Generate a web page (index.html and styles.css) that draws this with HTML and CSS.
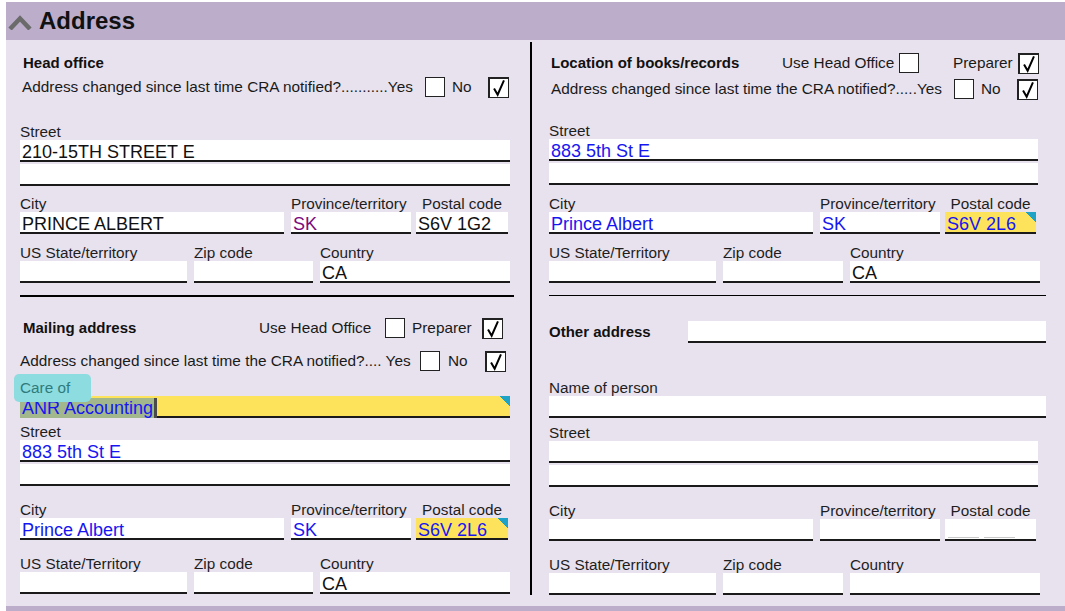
FILE: index.html
```html
<!DOCTYPE html>
<html lang="en">
<head>
    <meta charset="UTF-8">
    <title>Address</title>
    <link rel="stylesheet" href="styles.css">
</head>
<body>
<div class="page">
    <section class="section">
        <div class="section-head">
            <svg class="caret" width="24" height="16" viewBox="0 0 24 16"><polyline points="2,15 12,4.5 22,15" fill="none" stroke="#6b6b6b" stroke-width="4.5"/></svg>
            <h2>Address</h2>
        </div>

        <div class="columns">
            <!-- Head office / mailing -->
            <div class="col col-left">
                <div class="heading mt12">Head office</div>
                <div class="check-row mt4">
                    <span class="q q-wide">Address changed since last time CRA notified?...........Yes</span>
                    <span class="cb"></span>
                    <span class="no">No</span>
                    <span class="cb checked"><svg viewBox="0 0 20 20"><path d="M4.5 10.5 L8.5 17.5 L15.5 1.5"/></svg></span>
                </div>

                <div class="field mt25 w-street">
                    <label>Street</label>
                    <div class="box">210-15TH STREET E</div>
                    <div class="box mt2"></div>
                </div>
                <div class="field-row mt9">
                    <div class="field w-city"><label>City</label><div class="box">PRINCE ALBERT</div></div>
                    <div class="field w-prov"><label>Province/territory</label><div class="box purple">SK</div></div>
                    <div class="field w-postal postal"><label>Postal code</label><div class="box">S6V 1G2</div></div>
                </div>
                <div class="field-row wide-gap mt10">
                    <div class="field w-state"><label>US State/territory</label><div class="box"></div></div>
                    <div class="field w-zip"><label>Zip code</label><div class="box"></div></div>
                    <div class="field w-country"><label>Country</label><div class="box">CA</div></div>
                </div>

                <div class="rule thick mt12"></div>

                <div class="check-row mt20">
                    <span class="heading h-mailing">Mailing address</span>
                    <span class="opt opt-use">Use Head Office</span>
                    <span class="cb"></span>
                    <span class="opt opt-prep">Preparer</span>
                    <span class="cb checked"><svg viewBox="0 0 20 20"><path d="M4.5 10.5 L8.5 17.5 L15.5 1.5"/></svg></span>
                </div>
                <div class="check-row flush mt11">
                    <span class="q q-mail">Address changed since last time the CRA notified?.... Yes</span>
                    <span class="cb"></span>
                    <span class="no no-mail">No</span>
                    <span class="cb checked"><svg viewBox="0 0 20 20"><path d="M4.5 10.5 L8.5 17.5 L15.5 1.5"/></svg></span>
                </div>

                <div class="field care mt7 w-street">
                    <label class="care-label">Care of</label>
                    <div class="box yellow blue flagged"><span class="sel">ANR Accounting</span></div>
                    <div class="focus-ring"></div>
                </div>
                <div class="field mt5 w-street">
                    <label>Street</label>
                    <div class="box blue">883 5th St E</div>
                    <div class="box mt2"></div>
                </div>
                <div class="field-row mt15">
                    <div class="field w-city"><label>City</label><div class="box blue">Prince Albert</div></div>
                    <div class="field w-prov"><label>Province/territory</label><div class="box blue">SK</div></div>
                    <div class="field w-postal postal"><label>Postal code</label><div class="box yellow blue flagged">S6V 2L6</div></div>
                </div>
                <div class="field-row wide-gap mt15">
                    <div class="field w-state"><label>US State/Territory</label><div class="box"></div></div>
                    <div class="field w-zip"><label>Zip code</label><div class="box"></div></div>
                    <div class="field w-country"><label>Country</label><div class="box">CA</div></div>
                </div>
            </div>

            <!-- Books and records / other -->
            <div class="col col-right">
                <div class="check-row mt10">
                    <span class="heading h-books">Location of books/records</span>
                    <span class="opt opt-use-r">Use Head Office</span>
                    <span class="cb"></span>
                    <span class="opt opt-prep-r">Preparer</span>
                    <span class="cb checked"><svg viewBox="0 0 20 20"><path d="M4.5 10.5 L8.5 17.5 L15.5 1.5"/></svg></span>
                </div>
                <div class="check-row mt4">
                    <span class="q q-wide">Address changed since last time the CRA notified?.....Yes</span>
                    <span class="cb"></span>
                    <span class="no">No</span>
                    <span class="cb checked"><svg viewBox="0 0 20 20"><path d="M4.5 10.5 L8.5 17.5 L15.5 1.5"/></svg></span>
                </div>

                <div class="field mt22 w-street-r">
                    <label>Street</label>
                    <div class="box blue">883 5th St E</div>
                    <div class="box mt2"></div>
                </div>
                <div class="field-row mt10">
                    <div class="field w-city"><label>City</label><div class="box blue">Prince Albert</div></div>
                    <div class="field w-prov"><label>Province/territory</label><div class="box blue">SK</div></div>
                    <div class="field w-postal-r postal"><label>Postal code</label><div class="box yellow blue flagged">S6V 2L6</div></div>
                </div>
                <div class="field-row wide-gap mt10">
                    <div class="field w-state"><label>US State/Territory</label><div class="box"></div></div>
                    <div class="field w-zip-r"><label>Zip code</label><div class="box"></div></div>
                    <div class="field w-country"><label>Country</label><div class="box">CA</div></div>
                </div>

                <div class="rule thin mt12"></div>

                <div class="other-row mt25">
                    <span class="heading h-other">Other address</span>
                    <div class="box w-other"></div>
                </div>

                <div class="field mt36 w-full-r">
                    <label>Name of person</label>
                    <div class="box"></div>
                </div>
                <div class="field mt6 w-street-r">
                    <label>Street</label>
                    <div class="box"></div>
                    <div class="box mt2"></div>
                </div>
                <div class="field-row mt15">
                    <div class="field w-city"><label>City</label><div class="box"></div></div>
                    <div class="field w-prov"><label>Province/territory</label><div class="box"></div></div>
                    <div class="field w-postal-r postal"><label>Postal code</label><div class="box dashes"><span></span><span></span></div></div>
                </div>
                <div class="field-row wide-gap mt15">
                    <div class="field w-state"><label>US State/Territory</label><div class="box"></div></div>
                    <div class="field w-zip-r"><label>Zip code</label><div class="box"></div></div>
                    <div class="field w-country"><label>Country</label><div class="box"></div></div>
                </div>
            </div>
        </div>
        <div class="section-foot"></div>
    </section>
</div>
</body>
</html>
```

FILE: styles.css
```css
body {
    margin: 0;
    font-family: "Liberation Sans", Arial, sans-serif;
    color: #1a1a1a;
    background: #fff;
}
.page {
    padding: 2px 0 0 6px;
}
.section {
    background: #e8e2ee;
}
.section-head {
    height: 38px;
    background: #bcaecb;
    display: flex;
    align-items: center;
    padding-left: 2px;
}
.caret {
    margin-top: 1px;
}
.section-head h2 {
    margin: 0 0 0 7px;
    font-size: 24px;
    font-weight: bold;
    color: #111;
}
.section-foot {
    height: 8px;
    background: #bcaecb;
}
.columns {
    display: flex;
    padding: 2px 0 11px;
}
.col-left {
    width: 510px;
    padding-left: 14px;
    border-right: 2px solid #000;
}
.col-right {
    flex: 1;
    padding-left: 17px;
}

/* spacing */
.mt2 { margin-top: 2px; }
.mt4 { margin-top: 4px; }
.mt5 { margin-top: 5px; }
.mt6 { margin-top: 6px; }
.mt7 { margin-top: 7px; }
.mt9 { margin-top: 9px; }
.mt10 { margin-top: 10px; }
.mt11 { margin-top: 11px; }
.mt12 { margin-top: 12px; }
.mt15 { margin-top: 15px; }
.mt20 { margin-top: 20px; }
.mt22 { margin-top: 22px; }
.mt25 { margin-top: 25px; }
.mt36 { margin-top: 36px; }

.heading {
    font-size: 15px;
    font-weight: bold;
    line-height: 18px;
    padding-left: 3px;
    color: #111;
}

/* checkbox rows */
.check-row {
    display: flex;
    align-items: center;
    height: 22px;
    font-size: 15.35px;
    padding-left: 2px;
}
.check-row.flush {
    padding-left: 0;
}
.q { white-space: nowrap; }
.q-wide { width: 403px; }
.q-mail { width: 400px; }
.no { margin-left: 7px; width: 36px; }
.no-mail { margin-left: 8px; width: 37px; }
.h-mailing { width: 236px; padding-left: 1px; }
.opt-use { width: 126px; }
.opt-prep { margin-left: 7px; width: 70px; }
.h-books { width: 231px; padding-left: 0; }
.opt-use-r { width: 117px; }
.opt-prep-r { margin-left: 34px; width: 65px; }
.cb {
    width: 18px;
    height: 18px;
    background: #fff;
    border: 1px solid #222;
    display: block;
}
.cb.checked {
    border-left-width: 2px;
    border-top-width: 2px;
}
.cb svg {
    display: block;
    width: 18px;
    height: 18px;
}
.cb path {
    fill: none;
    stroke: #000;
    stroke-width: 2.2;
}

/* fields */
.field {
    position: relative;
}
.field label {
    display: block;
    font-size: 15.3px;
    line-height: 17px;
    height: 17px;
    color: #1e1e1e;
    white-space: nowrap;
}
.field .care-label {
    position: relative;
    z-index: 2;
    color: #2f7b7c;
}
.postal label {
    text-align: center;
}
.box {
    position: relative;
    height: 20px;
    background: #fff;
    border-bottom: 2px solid #1a1a1a;
    font-size: 18px;
    line-height: 24px;
    padding-left: 2px;
    color: #111;
    white-space: nowrap;
}
.box.blue { color: #1616f2; }
.box.purple { color: #7d0a7d; }
.box.yellow { background: #fde35b; }
.box.flagged::after {
    content: "";
    position: absolute;
    top: 0;
    right: 0;
    width: 10px;
    height: 10px;
    background: linear-gradient(225deg, #1ea3c6 50%, transparent 51%);
}
.sel {
    background: #a2b78c;
    border-right: 3px solid #4a4a4a;
    padding-right: 1px;
    margin-left: -2px;
    padding-left: 2px;
}
.focus-ring {
    position: absolute;
    z-index: 1;
    left: -6px;
    top: -5px;
    width: 77px;
    height: 28px;
    border-radius: 5px;
    background: #8ddce0;
}
.box.dashes {
    display: flex;
    align-items: flex-end;
    padding-left: 3px;
}
.box.dashes span {
    width: 31px;
    height: 1px;
    background: #c8c8c8;
    margin-right: 5px;
    margin-bottom: 1px;
}

.field-row {
    display: flex;
    gap: 7px;
}
.field-row .w-postal,
.field-row .w-postal-r {
    margin-left: -2px;
}
.w-street { width: 490px; }
.w-street-r { width: 489px; }
.w-full-r { width: 497px; }
.w-city { width: 264px; }
.w-prov { width: 120px; }
.w-postal { width: 92px; }
.w-postal-r { width: 91px; }
.w-state { width: 167px; }
.w-zip { width: 119px; }
.w-zip-r { width: 120px; }
.w-country { width: 190px; }

.rule { background: #000; }
.rule.thick { height: 2px; width: 494px; }
.rule.thin { height: 1px; width: 497px; }

.other-row {
    display: flex;
    align-items: center;
}
.h-other {
    width: 139px;
    padding-left: 0;
}
.w-other { width: 356px; }
```
